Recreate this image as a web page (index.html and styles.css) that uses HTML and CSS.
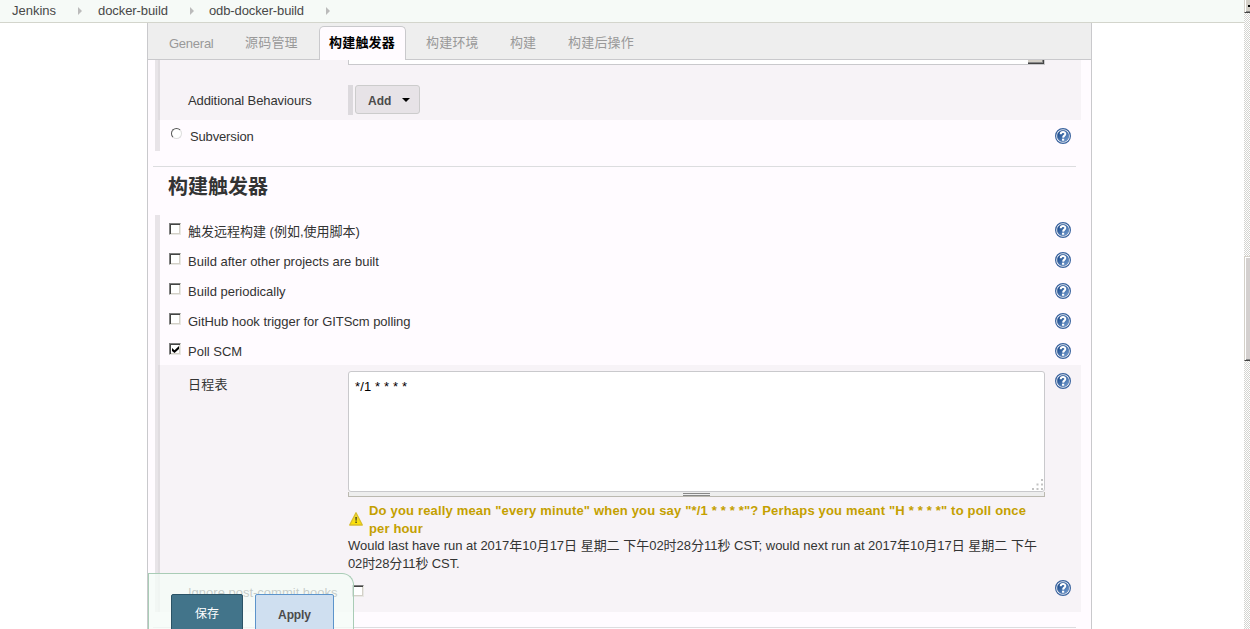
FILE: index.html
```html
<!DOCTYPE html>
<html lang="zh-CN">
<head>
<meta charset="utf-8">
<title>odb-docker-build Config</title>
<link rel="stylesheet" href="styles.css">
</head>
<body>
<svg class="defs" width="0" height="0">
  <defs>
    <linearGradient id="blue" x1="0" y1="0" x2="1" y2="1"><stop offset=".2" stop-color="#1f4f8f"/><stop offset="1" stop-color="#7ba3d6"/></linearGradient>
    <linearGradient id="yellow" x1="0" y1="0" x2="0" y2="1"><stop offset="0" stop-color="#e9d640"/><stop offset="1" stop-color="#ffe300"/></linearGradient>
    <symbol id="help" viewBox="0 0 16 16">
      <circle cx="8" cy="8" r="7.4" fill="#fff" stroke="#3a639e" stroke-width="1.2"/>
      <circle cx="8" cy="8" r="5.8" fill="url(#blue)" stroke="#3a639e" stroke-width=".5"/>
      <path d="M5.700 6.200C5.700 3.200 10.400 3.300 10.300 6C10.300 7.700 8.200 7.600 8.100 9.600" fill="none" stroke="#fff" stroke-width="2"/>
      <rect x="7" y="10.700" width="2.200" height="2" fill="#fff"/>
    </symbol>
  </defs>
</svg>
<div class="app">
  <nav class="crumbs">
    <span class="c1">Jenkins</span><i></i><span class="c2">docker-build</span><i></i><span class="c3">odb-docker-build</span><i></i>
  </nav>
  <main class="panel">
    <div class="tabs">
      <span class="tab t1">General</span><span class="tab t2">源码管理</span><span class="tab active">构建触发器</span><span class="tab t4">构建环境</span><span class="tab t5">构建</span><span class="tab t6">构建后操作</span>
    </div>
    <section class="group scm">
      <div class="nested behaviours">
        <div class="cutselect"><b></b></div>
        <div class="addrow">
          <span class="label l-add">Additional Behaviours</span>
          <div class="addbox"><button class="add">Add<i></i></button></div>
        </div>
      </div>
      <div class="row radio-row"><span class="radio"></span><span class="label l-sub">Subversion</span><svg class="help"><use href="#help"/></svg></div>
    </section>
    <hr>
    <h2>构建触发器</h2>
    <section class="group triggers">
      <div class="row"><span class="check"></span><span class="label l1">触发远程构建 (例如,使用脚本)</span><svg class="help"><use href="#help"/></svg></div>
      <div class="row"><span class="check"></span><span class="label l2">Build after other projects are built</span><svg class="help"><use href="#help"/></svg></div>
      <div class="row low"><span class="check"></span><span class="label l3">Build periodically</span><svg class="help"><use href="#help"/></svg></div>
      <div class="row low"><span class="check"></span><span class="label l4">GitHub hook trigger for GITScm polling</span><svg class="help"><use href="#help"/></svg></div>
      <div class="row low"><span class="check"><svg width="7" height="7" viewBox="0 0 7 7"><path d="M0 2v3l2.500 2L7 3V0L2.500 4.300z"/></svg></span><span class="label l5">Poll SCM</span><svg class="help"><use href="#help"/></svg></div>
      <div class="nested schedule">
        <span class="label l-sched">日程表</span>
        <div class="field">
          <div class="textarea"><span>*/1 * * * *</span>
            <svg width="12" height="12" viewBox="0 0 12 12" fill="#c3c3c3"><path d="M9 0h2v2H9zM4.500 4.500h2v2h-2zM9 4.500h2v2H9zM0 9h2v2H0zM4.500 9h2v2h-2zM9 9h2v2H9z"/></svg>
          </div>
          <div class="handle"><i></i></div>
          <div class="warning">
            <svg width="16" height="16" viewBox="0 0 16 16"><path d="M8 1.800 14.300 14H1.700z" fill="url(#yellow)" stroke="#d8bd2c" stroke-width="1.300" stroke-linejoin="round"/><path d="M7.200 6h1.800l-.3 3.700H7.500zM7.300 10.600h1.600v1.500H7.300z" fill="#5c551c"/></svg>
            <div><p class="w1">Do you really mean "every minute" when you say "*/1 * * * *"? Perhaps you meant "H * * * *" to poll once</p><p class="w2">per hour</p></div>
          </div>
          <p class="info i1">Would last have run at 2017年10月17日 星期二 下午02时28分11秒 CST; would next run at 2017年10月17日 星期二 下午</p>
          <p class="info i2">02时28分11秒 CST.</p>
        </div>
        <svg class="help"><use href="#help"/></svg>
        <span class="label l-ign">Ignore post-commit hooks</span>
        <span class="check ignore"></span>
        <svg class="help last"><use href="#help"/></svg>
      </div>
    </section>
    <hr class="end">
  </main>
</div>
<div class="scrollbar"><div class="up"><i></i></div><div class="track"></div><div class="thumb"></div><div class="track"></div></div>
<div class="actions"><button class="save">保存</button><button class="apply">Apply</button></div>
</body>
</html>
```

FILE: styles.css
```css
* { box-sizing: border-box; }
body { margin: 0; width: 1250px; height: 629px; overflow: hidden; display: flex; background: #fff; color: #333; font: 13px/18px "Liberation Sans", "Noto Sans CJK SC", sans-serif; }
.defs { position: absolute; }
.app { width: 1244px; height: 629px; overflow: hidden; }
.crumbs { height: 23px; background: #f6faf7; border-bottom: 1px solid #d3d5cc; padding: 0 0 0 12px; display: flex; align-items: center; white-space: nowrap; }
.crumbs span { color: #484848; }
.crumbs i { border-left: 4px solid #bbb; border-top: 4px solid transparent; border-bottom: 4px solid transparent; }
.c1 { width: 66px; }
.c2 { width: 92px; margin-left: 16px; letter-spacing: -.08px; }
.c3 { width: 117px; margin-left: 15px; letter-spacing: -.12px; }
.panel { width: 945px; height: 606px; margin-left: 147px; border: 1px solid #c9c9cc; border-width: 0 1px; background: #fffbff; overflow: hidden; }
.tabs { height: 37px; background: #eee; border-bottom: 1px solid #c9c9cc; display: flex; padding-left: 21px; }
.tab { line-height: 40px; color: #999; white-space: nowrap; height: 36px; }
.t1 { width: 76px; line-height: 41px; letter-spacing: -.25px; }
.t2 { width: 74px; letter-spacing: .2px; }
.active { width: 87px; height: 34px; margin-top: 3px; line-height: 32px; padding-left: 9px; background: #fffbff; border: 1px solid #c9c9cc; border-bottom: 0; border-radius: 5px 5px 0 0; color: #000; font-weight: bold; letter-spacing: .2px; }
.t4 { margin-left: 20px; width: 84px; letter-spacing: .2px; }
.t5 { width: 58px; }
.t6 { letter-spacing: .2px; }
.group { margin-left: 7px; border-left: 5px solid #e8e4e8; }
.nested { margin-left: -2px; width: 923px; background: rgba(0, 0, 0, .03); }
.scm { height: 91px; }
.behaviours { height: 60px; padding-left: 30px; }
.cutselect { margin-left: 160px; width: 697px; height: 5px; background: #fff; border: 1px solid #c9c9cc; border-top: 0; display: flex; justify-content: flex-end; }
.cutselect b { width: 16px; height: 4px; background: #d4d0c8; border: solid #444; border-width: 0 1px 1px 0; box-shadow: inset -1px -1px #888; }
.addrow { display: flex; margin-top: 20px; }
.label { white-space: nowrap; }
.l-add { width: 160px; padding-top: 7px; letter-spacing: -.1px; }
.addbox { border-left: 5px solid #dcd9dd; height: 30px; padding-left: 2px; }
button { font: bold 12px/18px "Liberation Sans", "Noto Sans CJK SC", sans-serif; color: #4b4b4b; }
.add { width: 65px; height: 29px; background: #e7e3e7; border: 1px solid #ccc; border-radius: 3px; display: flex; align-items: center; padding: 2px 0 0 12px; }
.add i { margin: -2px 0 0 11px; border-top: 4px solid #000; border-left: 4px solid transparent; border-right: 4px solid transparent; }
.row { display: grid; grid-template-columns: 28px 867px 16px; height: 30px; align-items: start; }
.help { width: 16px; height: 16px; display: block; }
.row .label { margin-top: 8px; }
.row .help { margin-top: 7px; }
.low .help { margin-top: 8px; }
.l4 { letter-spacing: -.04px; }
.l-sub { letter-spacing: -.15px; }
.check { width: 12px; height: 12px; background: #fff; border: 1px solid; border-color: #808080 #e8e8e4 #e8e8e4 #808080; box-shadow: inset 1px 1px #444, inset -1px -1px #d4d0c8; display: flex; justify-content: center; align-items: center; }
.row .check { margin: 8px 0 0 9px; }
.radio-row { grid-template-columns: 30px 865px 16px; }
.radio-row .help { margin-top: 8px; }
.radio { width: 11px; height: 11px; margin: 8px 0 0 11px; border: 1.5px solid; border-color: #555 #ddd #ddd #555; border-radius: 50%; background: #fff; }
hr { border: 0; height: 1px; margin: 15px 15px 0 5px; background: #dcdddf; }
h2 { margin: 0 0 0 20px; font: bold 20px/40px "Liberation Sans", "Noto Sans CJK SC", sans-serif; height: 48px; }
.triggers { height: 397px; }
.schedule { display: grid; grid-template-columns: 160px 697px 10px 16px; grid-template-rows: 213px 34px; padding-left: 30px; align-items: start; }
.l-sched { margin-top: 11px; letter-spacing: .2px; }
.field { padding-top: 6px; }
.textarea { height: 121px; background: #fff; border: 1px solid #c9c9cc; border-radius: 3px; padding: 6px 0 0 6px; color: #000; display: flex; justify-content: space-between; }
.textarea span { letter-spacing: .15px; }
.textarea svg { align-self: flex-end; }
.handle { height: 5px; background: #eee; border: 1px solid #bbb9b0; border-top: 0; display: flex; justify-content: center; padding-top: 1px; }
.handle i { width: 27px; height: 3px; border: solid #888; border-width: 1px 0; }
.warning { display: flex; color: #c4a000; font-weight: bold; margin-top: 5px; }
.warning svg { margin: 9px 5px 0 0; flex: none; }
.w1 { letter-spacing: .177px; }
.w2 { letter-spacing: .15px; }
p { margin: 0; white-space: nowrap; }
.i1 { margin-top: -1px; letter-spacing: -.015px; }
.i2 { letter-spacing: -.12px; }
.schedule > .help { grid-column: 4; margin-top: 8px; }
.l-ign { margin-top: 6px; }
.ignore { margin: 7px 0 0 4px; }
.schedule > .last { margin-top: 2px; }
.end { margin-top: 15px; }
.scrollbar { width: 6px; height: 629px; display: flex; flex-direction: column; overflow: hidden; }
.up { height: 13px; background: #d4d0c8; border-left: 1px solid #d4d0c8; border-bottom: 1px solid #444; box-shadow: inset 1px 0 #fff, inset 0 -1px #888; overflow: hidden; }
.up i { display: block; margin: 5px 0 0 3px; border-bottom: 2px solid #000; width: 3px; }
.track { background: repeating-conic-gradient(#d4d4d0 0 25%, #fff 0 50%) 0 0 / 2px 2px; height: 243px; }
.thumb { height: 105px; background: #d4d0cf; border: solid #d4d0c8; border-width: 1px 0 1px 1px; border-bottom-color: #444; box-shadow: inset 1px 1px #fff, inset 0 -1px #888; }
.track:last-child { height: 268px; }
.actions { position: fixed; left: 148px; top: 573px; width: 206px; height: 56px; background: rgba(245, 252, 247, .76); border: 1px solid #a9ccb6; border-bottom: 0; border-radius: 0 12px 0 0; display: flex; padding: 20px 0 0 22px; gap: 12px; }
.actions button { height: 40px; border-radius: 2px; padding: 2px 0 0; }
.actions .save { width: 72px; background: #42748a; border: 1px solid #2b5366; color: #fff; font-weight: normal; padding: 0; }
.apply { width: 79px; background: #cfdff0; border: 1px solid #5c94cb; letter-spacing: -.1px; }
```
